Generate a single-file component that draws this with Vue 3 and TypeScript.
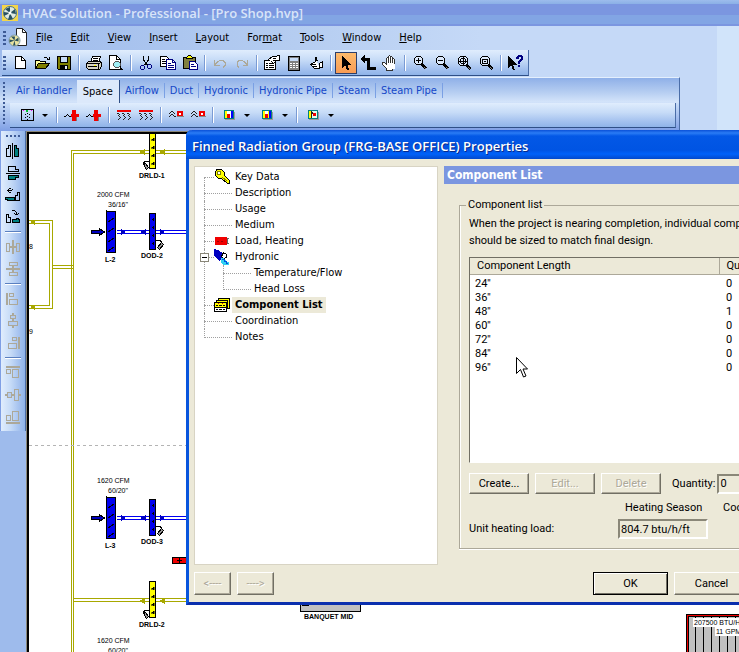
<script setup lang="ts">
import { ref } from 'vue'

type Shape = [d: string, fill?: string, stroke?: string]
interface Tool { id: string; icon?: string; sep?: boolean; on?: boolean; drop?: boolean }

const K = '#000'
const G = '#aca899'
const T = '#008080'
const N = '#000080'
const R = '#f00000'

const icons: Record<string, Shape[]> = {
  New: [['M3.5 1.5h6l4 4v8h-10z', '#fff', K], ['M9.5 1.5v4h4', 'none', K]],
  Open: [['M1.5 13.5v-8h4l1 1h5v2', '#ffff9c', K], ['M1.5 13.5l3-5h11l-4 5z', '#808000', K], ['M9.5 3.5l1-1h2l2 2M15.5 1.5v3h-3', 'none', K]],
  Save: [['M1.5 1.5h13v13h-12l-1-1z', '#808000', K], ['M4.5 1.5h7v6h-7z', '#c6dbf7', K], ['M4 10h8v5H4z', K], ['M9 11h2v3H9z', '#e0e8f4']],
  Print: [['M4.5 7.5l2-6h8l-2 6', '#fff', K], ['M7 3.5h5M6.5 5.5h5', 'none', K], ['M.5 8.5l2-2h12l1 1v4l-2 3h-11l-2-2z', '#d6d3c4', K], ['M.5 8.5h12v6M12.5 8.5l3-1M2 11.5h9', 'none', K], ['M8 9.6h2v1H8z', '#ffff00']],
  Preview: [['M1.5 .5h7l4 4v10h-11z', '#fff', K], ['M8.5 .5v4h4', 'none', K], ['M7.5 6.5h3l2 2v2l-2 2h-3l-2-2v-2z', '#9feef5', '#555'], ['M12 12l3 3M12 13l2 2', 'none', K]],
  Cut: [['M5.5 1v4l4 5M10.5 1v4l-4 5', 'none', K], ['M3.5 10.5h2l1 1v2l-1 1h-2l-1-1v-2zM10.5 9.5h2l1 1v2l-1 1h-2l-1-1v-2z', 'none', N]],
  Copy: [['M.5 1.5h6l3 3v7h-9z', '#fff', K], ['M2 4.5h3M2 6.5h5M2 8.5h5', 'none', K], ['M6.5 4.5h6l3 3v7h-9z', '#fff', N], ['M12.5 4.5v3h3M8 8.5h3M8 10.5h6M8 12.5h6', 'none', N]],
  Paste: [['M1.5 2.5h12v11h-12z', '#808040', K], ['M4.5 3.5v-1l2-2h2l2 2v1z', '#ffff00', K], ['M7.5 6.5h5l3 3v5h-8z', '#fff', N], ['M9 9.5h3M9 11.5h5', 'none', N]],
  Undo: [['M2.5 5v5h5M3 9.5l3-3 2-1h3l2 2v3l-2 2', 'none', G]],
  Redo: [['M13.5 5v5h-5M13 9.5l-3-3-2-1H5l-2 2v3l2 2', 'none', G]],
  Properties: [['M.5 5.5h11v9H.5z', '#fff', K], ['M2 8.5h2M5 8.5h5M2 10.5h2M5 10.5h5M2 12.5h2M5 12.5h5', 'none', K], ['M4.5 4.5l4-3h4l1-1h2v5h-3l-3 3-2-2', '#fff', K], ['M9 3.5h3M9 5.5h3', 'none', K]],
  Calculator: [['M2.5 1.5h11v14h-11z', '#808080', K], ['M4 3h8v3H4z', '#c6dbf7'], ['M4 8h2v1H4zM7 8h2v1H7zM10 8h2v1h-2zM4 10h2v1H4zM7 10h2v1H7zM10 10h2v1h-2zM4 12h2v1H4zM7 12h2v1H7zM10 12h2v1h-2z', '#fff']],
  Assign: [['M7.5 2.5v4l-5 3 4 4h5v-5l3-2v6h-3', '#fff', K], ['M3 9.5h5M5 11.5h4M8 5.5h2', 'none', K], ['M7 2h2v4H7z', K]],
  Pointer: [['M4 0v13l3-3 2 5h2.500l-2-5h4z', K]],
  Elbow: [['M0 4l5-4v3h5v9h6v3H7V6H5v3z', K]],
  Hand: [['M4.500 15.500v-2l-4-4v-2h2l2 2v-6l1-1 1 1v4-6l1-1 1 1v6-5l1-1 1 1v5-3l1-1 1 1v5l-2 4v2z', '#fff', '#333'], ['M5 9h8v5H6z', '#fff']],
  ZoomIn: [['M4.500 1.500h4l2 2v4l-2 2h-4l-2-2v-4z', '#dce9fb', K], ['M4 5.500h5M6.500 3v5', 'none', K], ['M10 8l4.500 4.500-2 2L8 10z', K], ['M12 12l2 2', 'none', '#888']],
  ZoomOut: [['M4.500 1.500h4l2 2v4l-2 2h-4l-2-2v-4z', '#dce9fb', K], ['M4 5.500h5', 'none', K], ['M10 8l4.500 4.500-2 2L8 10z', K], ['M12 12l2 2', 'none', '#888']],
  ZoomFit: [['M4.500 1.500h5l2 2v5l-2 2h-5l-2-2v-5z', '#dce9fb', K], ['M2 6h10M7 1v10M4.500 4v4M9.500 4v4M5 3.500h4M5 8.500h4', 'none', K], ['M11 9l4 4-2 2-4-4z', K], ['M12 12l2 2', 'none', '#888']],
  ZoomWindow: [['M4.500 1.500h5l2 2v5l-2 2h-5l-2-2v-5z', '#dce9fb', K], ['M4.500 4.500h5v4h-5zM6 6.500h2', 'none', K], ['M11 9l4 4-2 2-4-4z', K], ['M12 12l2 2', 'none', '#888']],
  Help: [['M0 1v12l3-3 2 5h2l-2-5h4z', K], ['M8 4V2l2-2h3l2 2v3l-3 2v2h-2V6l3-2V2h-2v2zM10 10h2v2h-2z', N]],
  Room: [['M2.500 2.500h12v11h-12z', 'none', K], ['M7 3h2v2H7z', '#00c030'], ['M12 3h1v1h-1zM4 3h1v1H4z', '#f0f'], ['M6 7h1v1H6zM8 6h1v1H8zM10 7h1v1h-1zM6 10h1v1H6zM8 9h1v1H8zM10 10h1v1h-1zM8 12h1v1H8z', K]],
  Coil: [['M0 9.500h2M2 8.500h1M3 7.500h1M4 8.500h1M5 9.500h2', 'none', K], ['M7 7h8v3H7zM8 3h4v11H8z', R], ['M12.500 10v4', 'none', '#777']],
  Baseboard: [['M1 3h14v2H1z', R], ['M1 6h2v1H1zM3 7h1v1H3zM2 8h1v1H2zM3 9h1v1H3zM4 10h1v1H4zM3 11h1v1H3zM2 12h1v1H2zM6 6h2v1H6zM8 7h1v1H8zM7 8h1v1H7zM8 9h1v1H8zM9 10h1v1H9zM8 11h1v1H8zM7 12h1v1H7zM11 6h2v1h-2zM13 7h1v1h-1zM12 8h1v1h-1zM13 9h1v1h-1zM14 10h1v1h-1zM13 11h1v1h-1zM12 12h1v1h-1z', '#222']],
  Unit: [['M9 4h6v5H9z', R], ['M11 6h2v2h-2z', '#fff'], ['M1 6h1v1H1zM2 5h1v1H2zM3 4h2v1H3zM5 5h1v1H5zM6 6h1v1H6zM1 9h1v1H1zM2 8h1v1H2zM3 7h2v1H3zM5 8h1v1H5zM6 9h2v1H6z', '#222'], ['M9 9.500h7', 'none', '#888']],
  PanelA: [['M3.500 3.500h9v8h-9z', '#fff', T], ['M4 4h2v7H4z', '#ffff00'], ['M6 7h3v4H6z', R], ['M10 4h2v7h-2z', '#00f'], ['M4 12.500h9.500V5', 'none', '#999']],
  PanelB: [['M3.500 3.500h9v8h-9z', '#fff', T], ['M4 4h2v7H4z', '#ffff00'], ['M6 7h3v4H6z', R], ['M9 4h1v7H9z', '#ffff00'], ['M10 4h2v7h-2z', '#00f'], ['M4 12.500h9.500V5', 'none', '#999']],
  PanelC: [['M3.500 3.500h9v8h-9z', '#dfe', T], ['M4 4h2v7H4z', '#ffff00'], ['M6 4h1v7H6zM7 5h1v2H7z', '#222'], ['M8 6h3v3H8z', R], ['M4 12.500h9.500V5', 'none', '#999']],
  FlipH: [['M1.500 13.500v-8h2v-3h2v11z', 'none', K], ['M7.500 0v16', 'none', K], ['M9.500 2.500h2v3h2v8h-4z', T, K]],
  FlipV: [['M3.500 1.500h7v3h3v2h-10z', 'none', K], ['M1 8.500h14', 'none', K], ['M3.500 10.500h10v2h-3v2h-7z', T, K]],
  RotateLeft: [['M.5 10.500h9v3h-7v-1h-2z', T, K], ['M10.500 13.500v-5h2v-3h2v8z', 'none', K], ['M2 3h1V2h1V1h2v1H4v1h3v1H4v1h2v1H4V5H3V4H2z', K], ['M7 2h1v1H7z', K]],
  RotateRight: [['M1.500 13.500v-8h2v3h2v5z', 'none', K], ['M7.500 13.500v-3h4v-1h2v1h1v3z', T, K], ['M7 1h3v1H7zM10 2h1v1h-1zM11 3h1v3h-1zM9 4h1v1H9zM10 5h3v1h-3zM13 4h1v1h-1z', K]],
  SpaceAcross: [['M7 1h2v14H7zM4 7h8v2H4z', G], ['M1.500 4.500h3v8h-3zM11.500 4.500h3v8h-3z', 'none', G]],
  SpaceDown: [['M1 7h14v2H1zM7 4h2v8H7z', G], ['M4.500 1.500h8v3h-8zM4.500 11.500h8v3h-8z', 'none', G]],
  AlignLeft: [['M1 2h2v12H1z', G], ['M4.500 2.500h4v3h-4zM4.500 8.500h8v5h-8z', 'none', G]],
  AlignCenter: [['M7 0h2v15H7z', G], ['M5.500 2.500h5v3h-5zM3.500 8.500h9v4h-9z', '#b5cdf1', G]],
  AlignRight: [['M13 2h2v12h-2z', G], ['M7.500 2.500h4v3h-4zM3.500 8.500h8v5h-8z', 'none', G]],
  AlignTop: [['M1 1h14v2H1z', G], ['M1.500 4.500h4v4h-4zM7.500 4.500h6v8h-6z', 'none', G]],
  AlignMiddle: [['M0 7h16v2H0z', G], ['M2.500 5.500h4v5h-4zM9.500 2.500h4v11h-4z', '#b5cdf1', G]],
  AlignBottom: [['M1 13h14v2H1z', G], ['M1.500 6.500h4v5h-4zM7.500 2.500h6v9h-6z', 'none', G]],
  Key: [['M2.500 .5h5l3 3v3l5 5v3h-2l-6-5h-3l-3-3v-3z', '#ffff00', K], ['M3 3h3v2H3z', '#fff'], ['M3.500 2.500h3v3h-3zM8 8l5 4', 'none', '#808000']],
  Load: [['M1 4h12v8H1z', R], ['M3 8h2M7 8h2', 'none', '#a00000'], ['M15 5.500h-2v5h2', 'none', '#666']],
  Pipe: [['M0 0l4 1 5 3-1 5-3 3-5-5z', '#0000c0'], ['M9.500 3.500l3 2v3l-3 1-2-2z', '#fff', K], ['M7 9h3v2h2v2h3v3H9l-2-3z', '#30d0f0'], ['M8 10h2v2h2v2h2', 'none', '#0050e0']],
  List: [['M4.500 1.500h11v10h-11z', '#ffff00', K], ['M2.500 3.500h11v8h-11z', '#ffff00', K], ['M.5 5.500h12v9H.5z', '#fff', K], ['M1 6h11v4H1z', '#ffff00'], ['M2 8.500h2M5 8.500h3M9 8.500h2M2 12.500h2M5 12.500h3M9 12.500h2M1 10.500h11', 'none', K], ['M4 6.500h1M8 6.500h1', 'none', R]],
}

const t = (icon: string, extra: Partial<Tool> = {}): Tool => ({ id: icon, icon, ...extra })
const s = (n: number): Tool => ({ id: 'sep' + n, sep: true })

const mainTools: Tool[] = [
  t('New'), t('Open'), t('Save'), s(1), t('Print'), t('Preview'), s(2), t('Cut'), t('Copy'), t('Paste'), s(3),
  t('Undo'), t('Redo'), s(4), t('Properties'), t('Calculator'), t('Assign'), s(5), t('Pointer', { on: true }),
  t('Elbow'), t('Hand'), s(6), t('ZoomIn'), t('ZoomOut'), t('ZoomFit'), t('ZoomWindow'), s(7), t('Help'),
]
const spaceTools: Tool[] = [
  t('Room', { drop: true }), s(1), t('Coil'), t('Coil', { id: 'Coil2' }), s(2), t('Baseboard'),
  t('Baseboard', { id: 'Baseboard2' }), s(3), t('Unit'), t('Unit', { id: 'Unit2' }), s(4),
  t('PanelA', { drop: true }), t('PanelB', { drop: true }), s(5), t('PanelC', { drop: true }),
]
const sideTools: Tool[] = [
  t('FlipH'), t('FlipV'), t('RotateLeft'), t('RotateRight'), s(1), t('SpaceAcross'), t('SpaceDown'), s(2),
  t('AlignLeft'), t('AlignCenter'), t('AlignRight'), s(3), t('AlignTop'), t('AlignMiddle'), t('AlignBottom'),
]

const menus: [string, string, string][] = [
  ['', 'F', 'ile'], ['', 'E', 'dit'], ['', 'V', 'iew'], ['', 'I', 'nsert'], ['', 'L', 'ayout'],
  ['For', 'm', 'at'], ['', 'T', 'ools'], ['', 'W', 'indow'], ['', 'H', 'elp'],
]

const tabs = ['Air Handler', 'Space', 'Airflow', 'Duct', 'Hydronic', 'Hydronic Pipe', 'Steam', 'Steam Pipe']
const activeTab = ref('Space')

interface Node { name: string; icon?: string; children?: string[] }
const tree: Node[] = [
  { name: 'Key Data', icon: 'Key' },
  { name: 'Description' },
  { name: 'Usage' },
  { name: 'Medium' },
  { name: 'Load, Heating', icon: 'Load' },
  { name: 'Hydronic', icon: 'Pipe', children: ['Temperature/Flow', 'Head Loss'] },
  { name: 'Component List', icon: 'List' },
  { name: 'Coordination' },
  { name: 'Notes' },
]
const selected = ref('Component List')
const expanded = ref(true)

const rows = [
  { len: "24''", qty: 0 }, { len: "36''", qty: 0 }, { len: "48''", qty: 1 }, { len: "60''", qty: 0 },
  { len: "72''", qty: 0 }, { len: "84''", qty: 0 }, { len: "96''", qty: 0 },
]
const quantity = ref('0')
const load = ref('804.7 btu/h/ft')

const supplies = [
  { y: 0, cfm: '2000 CFM', size: '36/16"', louver: 'L-2', damper: 'DOD-2' },
  { y: 286, cfm: '1620 CFM', size: '60/20"', louver: 'L-3', damper: 'DOD-3' },
]
const returns = [
  { y: 0, name: 'DRLD-1' },
  { y: 449, name: 'DRLD-2' },
]
</script>

<template>
  <div class="app">
    <header class="titlebar">
      <svg class="logo" viewBox="0 0 16 16">
        <rect width="16" height="16" fill="#f3d64b" />
        <circle cx="8" cy="8" r="6.500" fill="#dfe9e0" stroke="#4a7480" stroke-width="1" />
        <path d="M8 8L3 4l5-2zM8 8l5-4 1 5zM8 8l3 6-5 1zM8 8l-6 3V7z" fill="#28505e" />
        <circle cx="8" cy="8" r="1.500" fill="#fff" />
      </svg>
      <h1>HVAC Solution - Professional - [Pro Shop.hvp]</h1>
    </header>

    <nav class="menubar">
      <span class="grip"></span>
      <svg class="docicon" viewBox="0 0 20 20">
        <path d="M8.500 .5h6l4 4v13h-10z" fill="#fff" stroke="#222" />
        <path d="M14.500 .5v4h4" fill="none" stroke="#222" />
        <circle cx="6.500" cy="12.500" r="5.500" fill="#e8e2a0" stroke="#7a9aac" stroke-width="1" />
        <path d="M6.500 12.500L3 8.500h4zM6.500 12.500l4-3v4zM6.500 12.500l1 5H5zM6.500 12.500l-5 2v-3z" fill="#28505e" />
      </svg>
      <button v-for="m in menus" :key="m[1]">{{ m[0] }}<u>{{ m[1] }}</u>{{ m[2] }}</button>
    </nav>

    <div class="toolrow">
      <div class="toolbar main">
        <span class="grip"></span>
        <template v-for="x in mainTools" :key="x.id">
          <span v-if="x.sep" class="sep"></span>
          <button v-else class="tool" :class="{ on: x.on }" :aria-label="x.id">
            <svg viewBox="0 0 16 16"><path v-for="(p, i) in icons[x.icon!]" :key="i" :d="p[0]" :fill="p[1]" :stroke="p[2] ?? 'none'" /></svg>
          </button>
        </template>
      </div>
    </div>

    <section class="palette">
      <span class="grip tall"></span>
      <div class="palette-body">
        <div class="tabs" role="tablist">
          <button v-for="name in tabs" :key="name" role="tab" :class="{ active: name === activeTab }" @click="activeTab = name">{{ name }}</button>
        </div>
        <div class="toolbar space">
          <template v-for="x in spaceTools" :key="x.id">
            <span v-if="x.sep" class="sep"></span>
            <button v-else class="tool" :class="{ drop: x.drop }" :aria-label="x.id">
              <svg viewBox="0 0 16 16"><path v-for="(p, i) in icons[x.icon!]" :key="i" :d="p[0]" :fill="p[1]" :stroke="p[2] ?? 'none'" /></svg>
              <i v-if="x.drop" class="caret"></i>
            </button>
          </template>
        </div>
      </div>
    </section>

    <main class="workspace">
      <aside class="side">
        <span class="grip flat"></span>
        <template v-for="x in sideTools" :key="x.id">
          <span v-if="x.sep" class="hsep"></span>
          <button v-else class="tool" :aria-label="x.id">
            <svg viewBox="0 0 16 16"><path v-for="(p, i) in icons[x.icon!]" :key="i" :d="p[0]" :fill="p[1]" :stroke="p[2] ?? 'none'" /></svg>
          </button>
        </template>
      </aside>
      <div class="sheet">
        <svg class="drawing" width="100%" height="100%">
          <g transform="translate(-29 -134)">
            <g fill="none" stroke="#a8a800">
              <path d="M71.500 800V150.500H300M73.500 800V153.500H300" />
              <path d="M20 220.500h32.500v88H20M20 223.500h29.500v82H20M52.500 265.500h21M52.500 268.500h21" />
              <path d="M73.500 598.500H300M73.500 601.500H300" />
            </g>
            <path d="M30 222l5-2v5zM30 307l5-2v5z" fill="#a8a800" />
            <path d="M29 445.500h300" stroke="#b4b4b4" stroke-dasharray="3 3" />
            <text x="29" y="249">8</text>
            <text x="29" y="334">9</text>
            <g v-for="r in returns" :key="r.name" :transform="`translate(0 ${r.y})`">
              <path d="M139 152l6-3v6zM159 152l6-3v6z" fill="#a8a800" />
              <path d="M149.500 132.500h6v36h-6z" fill="#ffff00" stroke="#000" />
              <path d="M151 140l3-2v3zM151 148l3-2v3zM151 156l3-2v3zM151 164l3-2v3z" fill="#000" stroke="#000" stroke-width=".5" />
              <path d="M149 161.500h-4l-2 2" fill="none" stroke="#000" />
              <path d="M143.500 164.500l2-1 3 4-2 2z" fill="#999" stroke="#000" />
              <text x="139" y="178" class="b">{{ r.name }}</text>
            </g>
            <g v-for="v in supplies" :key="v.louver" :transform="`translate(0 ${v.y})`">
              <text x="97" y="197">{{ v.cfm }}</text>
              <text x="108" y="207">{{ v.size }}</text>
              <path d="M117 230.500h183M117 233.500h183" stroke="#0000f0" />
              <path d="M121 229l5 3-5 3zM146 229l-6 3 6 3zM160 229l5 3-5 3z" fill="#0000c0" />
              <path d="M91.500 230.500h8v-2l5 3.500-5 3.500v-2h-8z" fill="#0000c0" stroke="#000" />
              <path d="M106.500 211.500h9v41h-9z" fill="#0000f0" stroke="#000" />
              <path d="M106 210v43M108 222l6-4M108 232l6-4M108 242l6-4M108 251l6-4" stroke="#000" />
              <path d="M149.500 213.500h6v36h-6z" fill="#0000f0" stroke="#000" />
              <path d="M151 220l3-2v3zM151 228l3-2v3zM151 236l3-2v3zM151 244l3-2v3z" fill="#000" />
              <path d="M156 240.500h4l2 2" fill="none" stroke="#000" />
              <path d="M157.500 247.500l4-5 2 2-4 5z" fill="#999" stroke="#000" />
              <text x="105" y="262" class="b">{{ v.louver }}</text>
              <text x="141" y="258" class="b">{{ v.damper }}</text>
            </g>
            <text x="97" y="643">1620 CFM</text>
            <text x="108" y="653">60/20"</text>
            <path d="M172.500 557.500h30v6h-30z" fill="#f00000" stroke="#000" />
            <path d="M177 560.500h5M179.500 558v5" stroke="#000" />
            <path d="M300.500 580.500h60v31h-60z" fill="#c0c0c0" stroke="#000" />
            <path d="M302.500 600.500h6v5h-6z" fill="#f08020" stroke="#000" />
            <text x="304" y="619" class="b">BANQUET MID</text>
            <path d="M686.500 614.500h150v150h-150z" fill="#c0c0c0" stroke="#000" />
            <path d="M687.500 615.500h150v150h-150z" fill="none" stroke="#f00000" />
            <path d="M688.500 616.500h150v150h-150z" fill="none" stroke="#000" />
            <path d="M695.500 617v60M703.500 617v60M711.500 617v60M719.500 617v60M727.500 617v60M735.500 617v60" stroke="#000" />
            <path d="M693 618h80v9h-80zM715 627h50v9h-50z" fill="#fff" />
            <text x="694" y="625">207500 BTU/H</text>
            <text x="716" y="634">11 GPM</text>
          </g>
        </svg>
      </div>
    </main>

    <section class="dialog" role="dialog" aria-labelledby="dlg-title">
      <h2 id="dlg-title">Finned Radiation Group (FRG-BASE OFFICE) Properties</h2>
      <div class="dialog-body">
        <div class="tree">
          <ul>
            <li v-for="n in tree" :key="n.name">
              <button v-if="n.children" class="toggle" :aria-label="expanded ? 'Collapse' : 'Expand'" @click="expanded = !expanded"><i></i></button>
              <button class="node" :class="{ sel: selected === n.name, bare: !n.icon }" @click="selected = n.name">
                <svg v-if="n.icon" viewBox="0 0 16 16"><path v-for="(p, i) in icons[n.icon]" :key="i" :d="p[0]" :fill="p[1]" :stroke="p[2] ?? 'none'" /></svg>
                <span>{{ n.name }}</span>
              </button>
              <ul v-if="n.children && expanded">
                <li v-for="c in n.children" :key="c">
                  <button class="node" :class="{ sel: selected === c }" @click="selected = c"><span>{{ c }}</span></button>
                </li>
              </ul>
            </li>
          </ul>
        </div>

        <div class="pane">
          <h3>Component List</h3>
          <fieldset>
            <legend>Component list</legend>
            <p>When the project is nearing completion, individual components<br />should be sized to match final design.</p>
            <div class="list">
              <table>
                <thead><tr><th>Component Length</th><th>Quantity</th></tr></thead>
                <tbody><tr v-for="r in rows" :key="r.len"><td>{{ r.len }}</td><td>{{ r.qty }}</td></tr></tbody>
              </table>
              <svg class="cursor" viewBox="0 0 12 21"><path d="M.5 .5v16l4-4 3 7.500 2.500-1-3-7h4.500z" fill="#fff" stroke="#000" /></svg>
            </div>
            <div class="actions">
              <button class="btn">Create...</button>
              <button class="btn" disabled>Edit...</button>
              <button class="btn" disabled>Delete</button>
              <label for="qty">Quantity:</label>
              <input id="qty" v-model="quantity" />
            </div>
            <div class="loads">
              <span class="season heat">Heating Season</span>
              <span class="season">Cooling Season</span>
              <label for="load">Unit heating load:</label>
              <input id="load" v-model="load" readonly />
            </div>
          </fieldset>
        </div>

        <div class="steps">
          <button class="btn step" disabled>&lt;----</button>
          <button class="btn step" disabled>----&gt;</button>
        </div>
        <div class="confirm">
          <button class="btn big default">OK</button>
          <button class="btn big">Cancel</button>
        </div>
      </div>
    </section>
  </div>
</template>

<style>
html,
body {
  margin: 0;
}
</style>

<style scoped>
.app {
  position: relative;
  display: flex;
  flex-direction: column;
  min-height: 100vh;
  overflow: hidden;
  background: linear-gradient(90deg, #9ebbec 0, #b5cdf1 40%, #c5d9f7 65%, #c5d9f7 97%, #d1e4fa 97%);
  font: 11px/14px "DejaVu Sans Condensed", "Noto Sans", sans-serif;
  color: #000;
}
* {
  box-sizing: border-box;
}
button {
  margin: 0;
  padding: 0;
  border: 0;
  background: none;
  font: inherit;
  color: inherit;
  white-space: nowrap;
}
svg {
  display: block;
  flex: none;
}
.tool svg,
.node svg {
  width: 16px;
  height: 16px;
  shape-rendering: crispEdges;
}

.titlebar {
  display: flex;
  align-items: center;
  gap: 4px;
  height: 26px;
  padding: 0 2px;
  background: linear-gradient(#9dbcec 0, #8bb0e6 4px, #7b96e0 4px, #7b96e0 15px, #82a5e4 15px, #82a5e4 24px, #7b96e0 24px);
}
.logo {
  width: 16px;
  height: 16px;
}
h1 {
  margin: 0;
  font: 600 13px/18px "Open Sans", sans-serif;
  color: #d8e4f8;
  white-space: nowrap;
}

.menubar {
  display: flex;
  align-items: center;
  height: 24px;
  padding-left: 3px;
}
.menubar button {
  padding: 0 9px 0 8px;
}
.menubar button + button {
  padding: 0 9px;
}
.docicon {
  width: 20px;
  height: 20px;
  margin: 0 0 0 2px;
}
.grip {
  flex: none;
  width: 3px;
  height: 14px;
  background: repeating-linear-gradient(#3d5a95 0 2px, transparent 2px 4px);
}
.grip.tall {
  width: 2px;
  height: 44px;
  margin: 4px 3px 0;
}
.grip.flat {
  width: 14px;
  height: 2px;
  margin: 4px 0 3px;
  background: repeating-linear-gradient(90deg, #3d5a95 0 2px, transparent 2px 4px);
}

.toolrow {
  display: flex;
  height: 27px;
  padding-left: 2px;
}
.toolbar {
  display: flex;
  align-items: center;
  border-right: 1px solid #4a6da8;
  border-bottom: 1px solid #2f4f86;
  background: linear-gradient(#e0edfd, #c6dbf7 40%, #a5c2ef 75%, #8fb3e8);
}
.toolbar.main {
  height: 26px;
  padding: 0 1px 0 1px;
}
.main .grip {
  margin-right: 3px;
}
.tool {
  display: flex;
  flex: none;
  align-items: center;
  justify-content: center;
  width: 22px;
  height: 22px;
}
.tool.on {
  border: 1px solid #2c3f6b;
  background: linear-gradient(#fdbb6c, #f99c55);
}
.tool.drop {
  width: 36px;
  margin: 0 2px 0 0;
}
.tool.drop svg {
  margin: 0 7px 0 0;
}
.caret {
  width: 0;
  border: 3px solid transparent;
  border-top-color: #000;
  border-bottom: 0;
}
.sep {
  flex: none;
  width: 2px;
  height: 16px;
  margin: 0 3px;
  background: linear-gradient(90deg, #7a9bd4 50%, #fff 50%);
}

.palette {
  display: flex;
  width: 92%;
  height: 54px;
  border-top: 1px solid #e4effd;
  border-right: 1px solid #4a6da8;
  background: linear-gradient(#8fb0e8, #b5cdf1 14px, #d4e4fa 24px, #c6dbf7 26px, #7f9fe5);
}
.palette-body {
  flex: 1;
  min-width: 0;
}
.tabs {
  display: flex;
  align-items: center;
  height: 25px;
  color: #1548c8;
}
.tabs button {
  height: 15px;
  padding: 0 5px;
  border-right: 1px solid #7aa0e4;
}
.tabs button:first-child {
  padding-left: 8px;
  border-right: 0;
}
.tabs .active {
  height: 23px;
  align-self: flex-end;
  padding: 0 6px;
  border-right: 1px solid #2f4f86;
  background: #dce9fb;
  color: #000;
}
.toolbar.space {
  height: 25px;
  margin: 0 3px 0 2px;
  padding: 0 5px;
}

.workspace {
  display: flex;
  flex: 1;
  align-items: stretch;
  background: #9ebbec;
}
.side {
  display: flex;
  flex-direction: column;
  align-items: center;
  align-self: flex-start;
  width: 26px;
  padding-bottom: 3px;
  border-left: 1px solid #7f9fe5;
  border-right: 1px solid #4a6da8;
  background: linear-gradient(90deg, #e0edfd, #c6dbf7 40%, #a5c2ef 75%, #8fb3e8);
}
.hsep {
  width: 16px;
  height: 2px;
  margin: 3px 0;
  background: linear-gradient(#5a80c0 50%, #fff 50%);
}
.sheet {
  position: relative;
  flex: 1;
  overflow: hidden;
  border: solid #000;
  border-width: 2px 0 0 2px;
  outline: 1px solid #8a8778;
  margin-left: 1px;
  margin-top: 1px;
  background: #fff;
}
.drawing {
  position: absolute;
  inset: 0;
  shape-rendering: crispEdges;
}
.drawing text {
  font: 7px "Liberation Sans", sans-serif;
  fill: #000;
}
.drawing .b {
  font-weight: 700;
}

.dialog {
  position: absolute;
  top: 130px;
  left: 186px;
  right: -90px;
  border: solid #0855dd;
  border-width: 0 3px 3px;
  border-bottom-color: #0a2fae;
  border-radius: 6px 0 0 0;
  background: #ece9d8;
  font: 11px/14px Roboto, "Liberation Sans", sans-serif;
}
h2 {
  margin: 0 -3px;
  padding: 2px 6px 0;
  height: 29px;
  border-radius: 6px 0 0 0;
  background: linear-gradient(#0a50d8, #2a7cf5 3px, #0358e6 6px, #0054e3 20px, #0062fa 24px, #0349cc);
  font: 600 13px/29px "Open Sans", sans-serif;
  color: #fff;
  text-shadow: 1px 1px #0a2a8a;
  white-space: nowrap;
}
.dialog-body {
  display: grid;
  grid-template-columns: 244px 1fr;
  gap: 7px 6px;
  padding: 7px 0 7px 5px;
}
.tree {
  border: 1px solid #808080;
  border-color: #716f64 #fff #fff #716f64;
  outline: 1px solid #d8d4c4;
  outline-offset: -1px;
  background: #fff;
  font: 11px/16px "DejaVu Sans Condensed", "Noto Sans", sans-serif;
}
ul {
  margin: 0;
  padding: 0;
  list-style: none;
}
li {
  position: relative;
  margin-left: 9px;
}
li::before {
  content: "";
  position: absolute;
  top: 0;
  bottom: 0;
  left: 0;
  border-left: 1px dotted #a0a0a0;
}
.tree > ul > li:first-child::before {
  top: 8px;
}
li:last-child::before {
  bottom: auto;
  height: 9px;
}
li li {
  margin-left: 19px;
}
.tree > ul {
  padding-top: 2px;
}
.node {
  display: flex;
  align-items: center;
  height: 16px;
}
.node::before {
  content: "";
  width: 10px;
  border-top: 1px dotted #a0a0a0;
}
.bare::before,
li li .node::before {
  width: 28px;
}
.node svg {
  margin-right: 2px;
}
.node span {
  padding: 0 3px;
}
.sel span {
  background: #ece9d8;
  font-weight: 700;
}
.toggle {
  position: absolute;
  top: 4px;
  left: -4px;
  z-index: 1;
  display: grid;
  place-items: center;
  width: 9px;
  height: 9px;
  border: 1px solid #8a8778;
  background: #fff;
}
.toggle i {
  width: 5px;
  height: 1px;
  background: #000;
}

.pane {
  min-width: 0;
  padding-bottom: 16px;
}
h3 {
  margin: 0 0 14px;
  padding-left: 3px;
  height: 18px;
  background: #7b96e0;
  font: 700 12px/18px "DejaVu Sans Condensed", "Noto Sans", sans-serif;
  color: #fff;
}
fieldset {
  margin: 0 0 0 15px;
  padding: 3px 0 9px 9px;
  min-width: 0;
  border: 1px solid #aca899;
  box-shadow: inset 1px 0 #fff, 0 1px #fff;
  white-space: nowrap;
}
legend {
  margin-left: -3px;
  padding: 0 2px;
}
p {
  margin: 0 0 8px;
  line-height: 17px;
}
.list {
  position: relative;
  height: 206px;
  border: 1px solid #808080;
  border-color: #716f64 #fff #fff #716f64;
  background: #fff;
}
table {
  width: 100%;
  border-collapse: collapse;
  table-layout: fixed;
}
th,
td {
  padding: 0 5px;
  height: 14px;
  line-height: 14px;
  font-weight: 400;
  text-align: left;
}
td + td {
  padding-left: 7px;
}
th {
  height: 16px;
  padding: 1px 7px 0;
  border-right: 1px solid #aca899;
  border-bottom: 1px solid #aca899;
  background: #ece9d8;
}
th:first-child {
  width: 249px;
}
tbody::before {
  content: "";
  display: block;
  height: 2px;
}
.cursor {
  position: absolute;
  top: 99px;
  left: 46px;
  width: 12px;
  height: 21px;
}
.actions {
  display: flex;
  align-items: center;
  gap: 6px;
  margin-top: 10px;
}
.btn {
  width: 60px;
  height: 21px;
  border: 1px solid;
  border-color: #fff #716f64 #716f64 #fff;
  box-shadow: inset -1px -1px #aca899;
}
.btn:disabled {
  color: #aca899;
  text-shadow: 1px 1px #fff;
}
.actions label {
  margin: 0 -4px 0 5px;
}
input {
  height: 20px;
  padding: 0 1px;
  border: 2px solid;
  border-color: #8a8778 #fff #fff #8a8778;
  background: #ece9d8;
  font: inherit;
  color: inherit;
}
#qty {
  width: 60px;
}
.loads {
  display: grid;
  grid-template-columns: 149px 90px 100px;
  align-items: center;
  row-gap: 4px;
  column-gap: 0;
  margin-top: 7px;
}
.season {
  margin-left: 15px;
}
.heat {
  grid-column: 2;
  margin-left: 7px;
}
.steps,
.confirm {
  display: flex;
  gap: 6px;
}
.confirm {
  padding-left: 149px;
}
.btn.step {
  width: 37px;
  height: 23px;
}
.btn.big {
  width: 75px;
  height: 23px;
}
.btn.default {
  border-color: #000;
  box-shadow: inset 1px 1px #fff, inset -1px -1px #716f64;
}
</style>
